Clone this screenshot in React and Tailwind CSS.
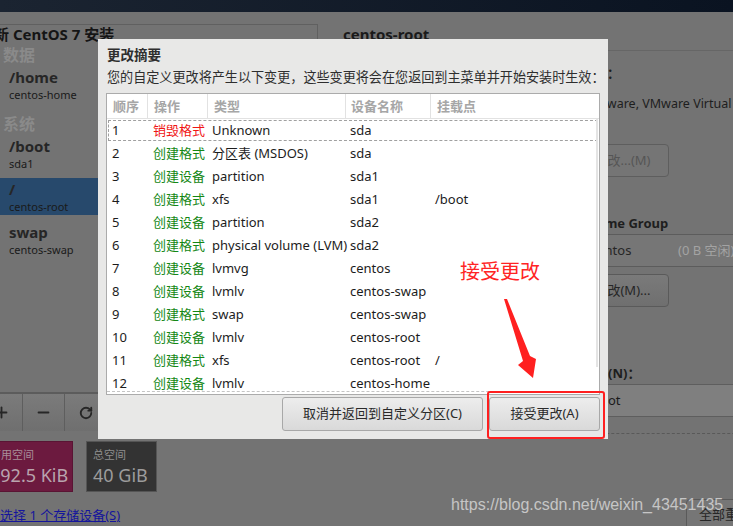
import { Plus, Minus, RotateCw } from "lucide-react";

const changes = [
  ["1", "销毁格式", "Unknown", "sda", ""],
  ["2", "创建格式", "分区表 (MSDOS)", "sda", ""],
  ["3", "创建设备", "partition", "sda1", ""],
  ["4", "创建格式", "xfs", "sda1", "/boot"],
  ["5", "创建设备", "partition", "sda2", ""],
  ["6", "创建格式", "physical volume (LVM)", "sda2", ""],
  ["7", "创建设备", "lvmvg", "centos", ""],
  ["8", "创建设备", "lvmlv", "centos-swap", ""],
  ["9", "创建格式", "swap", "centos-swap", ""],
  ["10", "创建设备", "lvmlv", "centos-root", ""],
  ["11", "创建格式", "xfs", "centos-root", "/"],
  ["12", "创建设备", "lvmlv", "centos-home", ""],
];

function MountItem({ title, device, selected }) {
  return (
    <div className={`h-[37px] pl-[28px] ${selected ? "bg-[#27496c]" : ""}`}>
      <div className="leading-[22px] text-[15px] font-bold text-[#262626]">{title}</div>
      <div className="leading-[14px] text-[11px] text-[#1a1a1a]">{device}</div>
    </div>
  );
}

function ToolButton({ children }) {
  return (
    <div className="w-[42px] h-full flex items-center justify-center border-r border-[#5e5e5e] bg-linear-to-b from-[#7b7b7b] to-[#6f6f6f] text-[#262626]">
      {children}
    </div>
  );
}

function LeftPane() {
  return (
    <div className="-ml-[19px] w-[337px] shrink-0 flex flex-col">
      <div className="mt-[12px] h-[407px] flex flex-col border-t border-r border-[#606060]">
        <div className="pl-[13px] h-[19px] leading-[19px] text-[15px] font-bold text-[#151515] whitespace-nowrap">
          新 CentOS 7 安装
        </div>
        <div className="flex-1">
          <div className="pl-[22px] leading-[22px] text-[16px] font-bold text-[#8a8a8a]">数据</div>
          <MountItem title="/home" device="centos-home" />
          <div className="mt-[10px] pl-[22px] leading-[22px] text-[16px] font-bold text-[#8a8a8a]">系统</div>
          <MountItem title="/boot" device="sda1" />
          <div className="mt-[6px]">
            <MountItem title="/" device="centos-root" selected />
          </div>
          <div className="mt-[6px]">
            <MountItem title="swap" device="centos-swap" />
          </div>
        </div>
        <div className="h-[39px] flex border-t-2 border-[#5c5c5c]">
          <ToolButton>
            <Plus size={17} strokeWidth={2.6} />
          </ToolButton>
          <ToolButton>
            <Minus size={17} strokeWidth={2.6} />
          </ToolButton>
          <ToolButton>
            <RotateCw size={14} strokeWidth={3.2} />
          </ToolButton>
          <div className="flex-1 bg-linear-to-b from-[#7b7b7b] to-[#6f6f6f]" />
        </div>
      </div>

      <div className="mt-[10px] flex gap-[13px]">
        <div className="w-[92px] h-[51px] pl-[8px] bg-[#6c1a3f] border border-[#5a1434] whitespace-nowrap">
          <div className="pt-[5px] leading-[16px] text-[11px] text-[#a88d99]">可用空间</div>
          <div className="leading-[24px] text-[18px] text-[#b9a4ae]">992.5 KiB</div>
        </div>
        <div className="w-[71px] h-[51px] pl-[6px] bg-[#333333] border border-[#555555] whitespace-nowrap">
          <div className="pt-[5px] leading-[16px] text-[11px] text-[#8e8e8e]">总空间</div>
          <div className="leading-[24px] text-[18px] text-[#9c9c9c]">40 GiB</div>
        </div>
      </div>

      <div className="mt-[15px] pl-[6px] leading-[16px] text-[13px] text-[#15159c] underline whitespace-nowrap">
        已选择 1 个存储设备(S)
      </div>
    </div>
  );
}

function RightPane() {
  return (
    <div className="flex-1 min-w-0 pl-[25px]">
      <div className="h-[39px] pt-[12px] leading-[20px] text-[15px] font-bold text-[#1a1a1a] border-b border-[#666666]">
        centos-root
      </div>
      <div className="flex whitespace-nowrap">
        <div className="w-[233px] shrink-0 pt-[12px] text-[13px]">
          <div className="leading-[20px] font-bold">挂载点(P)：</div>
          <div className="mt-[4px] h-[33px] w-[200px] bg-[#808080] border border-[#5e5e5e]" />
        </div>
        <div className="flex-1 flex flex-col items-start text-[13px]">
          <div className="mt-[12px] pl-[5px] leading-[20px] font-bold text-[#1e1e1e]">设备：</div>
          <div className="mt-[11px] pl-[12px] leading-[20px] text-[12.5px] text-[#1e1e1e]">VMware, VMware Virtual S (sda)</div>
          <div className="mt-[30px] h-[33px] w-[93px] flex items-center justify-center rounded-[4px] border border-[#5e5e5e] bg-[#757575] text-[#555555]">
            修改...(M)
          </div>
          <div className="mt-[36px] leading-[20px] font-bold text-[#1e1e1e]">Volume Group</div>
          <div className="mt-[1px] h-[33px] w-[240px] flex items-center pl-[15px] border-y border-[#5c5c5c] bg-[#767676]">
            <span className="w-[87px] text-[#262626]">centos</span>
            <span className="text-[#a3a3a3]">(0 B 空闲)</span>
          </div>
          <div className="mt-[7px] h-[33px] w-[93px] flex items-center justify-center rounded-[4px] border border-[#5a5a5a] bg-linear-to-b from-[#7a7a7a] to-[#6f6f6f] text-[#262626]">
            修改(M)...
          </div>
          <div className="mt-[56px] pl-[6px] leading-[20px] font-bold text-[#1e1e1e]">名称(N)：</div>
          <div className="mt-[1px] h-[33px] w-[240px] flex items-center pl-[18px] border border-[#5e5e5e] bg-[#7f7f7f] text-[#1a1a1a]">
            root
          </div>
          <div className="mt-[16px] w-[240px] border-t border-dashed border-[#595959]" />
          <div className="mt-[65px] ml-[110px] h-[32px] px-[12px] flex items-center rounded-[4px] border border-[#5a5a5a] bg-[#767676] text-[#262626]">
            全部重设(R)
          </div>
        </div>
      </div>
    </div>
  );
}

function SummaryDialog() {
  return (
    <div className="absolute left-[98px] top-[39px] w-[510px] h-[400px] bg-[#e8e8e7] px-[8px] pt-[6px] flex flex-col">
      <div className="pl-[1px] leading-[20px] text-[13.5px] font-bold text-[#2e2e2e]">更改摘要</div>
      <div className="mt-[2px] pl-[1px] leading-[20px] text-[13.1px] text-[#2e2e2e] whitespace-nowrap">
        您的自定义更改将产生以下变更，这些变更将会在您返回到主菜单并开始安装时生效：
      </div>

      <div className="relative mt-[6px] h-[302px] border border-[#ababab] bg-white flex flex-col overflow-hidden text-[13px]">
        <div className="h-[25px] shrink-0 flex border-b border-[#e2e2e2] font-bold text-[#a6a6a6] leading-[24px]">
          <div className="w-[41px] pl-[6px] border-r border-[#e2e2e2]">顺序</div>
          <div className="w-[60px] pl-[6px] border-r border-[#e2e2e2]">操作</div>
          <div className="w-[138px] pl-[6px] border-r border-[#e2e2e2]">类型</div>
          <div className="w-[85px] pl-[5px] border-r border-[#e2e2e2]">设备名称</div>
          <div className="flex-1 pl-[6px]">挂载点</div>
        </div>
        {changes.map(([n, action, type, device, mount], i) => (
          <div
            key={n}
            className={`h-[23px] shrink-0 flex items-center whitespace-nowrap text-[#1c1c1c] ${
              i === 0 ? "outline outline-dashed outline-[#a0a0a0] -outline-offset-2" : ""
            }`}
          >
            <div className="w-[41px] pl-[5px]">{n}</div>
            <div className={`w-[60px] pl-[5px] ${action === "销毁格式" ? "text-[#f01515]" : "text-[#148714]"}`}>
              {action}
            </div>
            <div className="w-[138px] pl-[4px]">{type}</div>
            <div className="w-[85px] pl-[4px]">{device}</div>
            <div className="flex-1 pl-[4px]">{mount}</div>
          </div>
        ))}
        <div className="absolute right-[1px] top-[25px] w-[2px] h-[248px] bg-[#e4e4e4]" />
        <div className="absolute left-0 right-0 bottom-[2px] border-t border-dashed border-[#c4c4c4]" />
      </div>

      <div className="mt-[2px] flex justify-end gap-[6px] text-[13px] text-[#2a2a2a]">
        <button className="w-[201px] h-[34px] rounded-[3px] border border-[#a8a8a8] bg-linear-to-b from-[#ededed] to-[#d9d9d9]">
          取消并返回到自定义分区(C)
        </button>
        <button className="w-[111px] h-[34px] rounded-[3px] border border-[#a8a8a8] bg-linear-to-b from-[#ededed] to-[#d9d9d9]">
          接受更改(A)
        </button>
      </div>
    </div>
  );
}

export default function App() {
  return (
    <div className="relative w-[733px] h-[526px] overflow-hidden bg-[#737373] font-['Noto_Sans','Noto_Sans_CJK_SC',sans-serif] text-[#1e1e1e]">
      <div className="h-[12px] bg-linear-to-r from-[#1b2431] to-[#0a1321]" />
      <div className="flex">
        <LeftPane />
        <RightPane />
      </div>

      <SummaryDialog />

      {/* annotations drawn on top of the screenshot */}
      <div className="absolute left-[460px] top-[257px] leading-[28px] text-[20px] text-[#ff2424] font-['Noto_Sans_CJK_SC',sans-serif]">
        接受更改
      </div>
      <svg className="absolute left-0 top-0 pointer-events-none" width="733" height="526">
        <polygon points="504,299 507,299 530,356 536,359 533,378 518,365 523,361" fill="#ff2020" />
      </svg>
      <div className="absolute left-[487px] top-[391px] w-[118px] h-[48px] border-2 border-[#ff1f1f] rounded-[3px]" />

      <div className="absolute left-[451px] top-[494px] text-[16px] leading-[22px] text-white/60 font-['Liberation_Sans',Arial,sans-serif] whitespace-nowrap">
        https://blog.csdn.net/weixin_43451435
      </div>
    </div>
  );
}
